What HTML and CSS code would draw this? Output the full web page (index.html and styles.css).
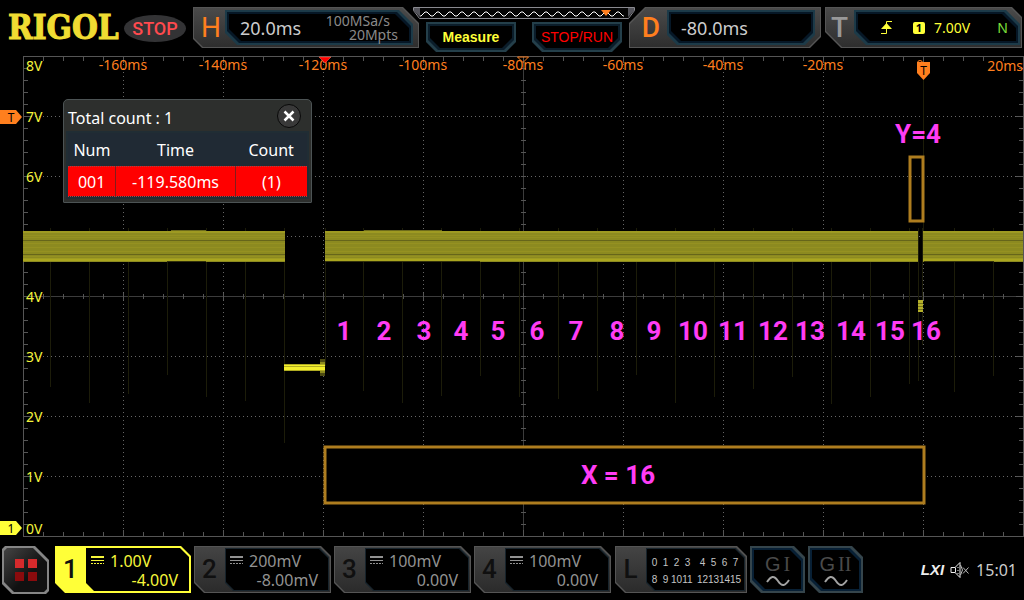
FILE: index.html
```html
<!DOCTYPE html>
<html lang="en">
<head>
<meta charset="utf-8">
<meta name="viewport" content="width=device-width, initial-scale=1">
<title>RIGOL oscilloscope</title>
<link rel="stylesheet" href="styles.css">
</head>
<body>
<header class="topbar">
  <div class="brand">
    <span class="logo">RIGOL</span>
    <span class="run-state">STOP</span>
  </div>
  <section class="cut panel panel-h">
    <span class="panel-key">H</span>
    <div class="cut screen screen-h">
      <span class="value">20.0ms</span>
      <span class="rates"><span>100MSa/s</span><span>20Mpts</span></span>
    </div>
  </section>
  <section class="center">
    <svg class="memory" viewBox="0 0 222 12" aria-hidden="true">
      <path d="M.5.5h221v3l-6 8H6.500l-6-8z" fill="#050505" stroke="#8a8a90"/>
      <path d="M1 1h6v9L1 4zM221 1h-6v9l6-6z" fill="#55555c"/>
      <path id="wave" fill="none" stroke="#fff"/>
      <path d="M188 3h10l-5 6z" fill="#ff7f1e"/>
    </svg>
    <div class="quick">
      <button class="cut quick-button measure" type="button">Measure</button>
      <button class="cut quick-button stoprun" type="button">STOP/RUN</button>
    </div>
  </section>
  <section class="cut panel panel-d">
    <span class="panel-key">D</span>
    <div class="cut screen screen-d"><span class="value">-80.0ms</span></div>
  </section>
  <section class="cut panel panel-t">
    <span class="panel-key">T</span>
    <div class="cut screen screen-t">
      <svg class="edge" viewBox="0 0 12 13" aria-hidden="true"><path d="M0 12.500h5.500v-12H11" fill="none" stroke="#ffff38"/><path d="M0 8h11L5.500 2z" fill="#ffff38"/></svg>
      <span class="source">1</span>
      <span class="level">7.00V</span>
      <span class="mode">N</span>
    </div>
  </section>
</header>

<main class="scope">
  <svg class="plot" viewBox="0 56 1024 482" role="img" aria-label="Waveform display">
    <defs>
      <pattern id="trace" width="4" height="31" y="231" patternUnits="userSpaceOnUse">
        <path d="M0 0h4v31H0z" fill="#8c8a20"/>
        <path d="M0 0h4v2H0zM0 27h4v1H0z" fill="#9e9a22"/>
        <path d="M0 28h4v2H0z" fill="#aaa61f"/>
        <path d="M0 4h4v1H0zM0 6h4v1H0zM0 12h4v1H0zM0 16h4v1H0zM0 20h4v1H0zM0 25h4v1H0z" fill="#959121"/>
        <path d="M0 9h4v1H0zM0 23h4v1H0z" fill="#66651a"/>
      </pattern>
    </defs>
    <g id="grid" shape-rendering="crispEdges"></g>
    <g id="spikes" shape-rendering="crispEdges"></g>
    <g fill="url(#trace)" shape-rendering="crispEdges">
      <path d="M23 231h262v31H23zM325 231h593v31H325zM923 231h100v31H923z"/>
    </g>
    <g shape-rendering="crispEdges">
      <path d="M167 261h39v1h-39zM325 261h155v1H325zM924 261h70v1h-70z" fill="#33320c"/>
      <path d="M171 230h35v1h-35zM364 230h78v1h-78z" fill="#6d6b1a"/>
      <path d="M284 364h41v7h-41z" fill="#b0ac22"/>
      <path d="M284 365h41v1h-41zM284 367h41v3h-41z" fill="#f3ee2c"/>
      <path d="M320 359h5v5h-5zM320 371h5v5h-5z" fill="#4c4a12"/>
      <path d="M320 362h5v2h-5zM320 371h5v2h-5z" fill="#8c8a1d"/>
      <path d="M918 300h5v12h-5z" fill="#b5b02a"/>
      <path d="M918 303h5v1h-5zM918 306h5v1h-5zM918 309h5v1h-5z" fill="#77751d"/>
    </g>
    <g id="axes" class="axis"></g>
    <path d="M319 57h12l-6 6z" fill="#f00" stroke="#ff8060" stroke-width=".5"/>
    <path d="M517.500 57h11l-5.500 5.500z" fill="none" stroke="#ff7f1e"/>
    <circle cx="920" cy="63" r="2.500" fill="none" stroke="#ff7f1e"/>
    <path d="M917 62h13v11l-6.500 7-6.500-7z" fill="#ff7f1e"/>
    <text class="tag" x="923.500" y="75">T</text>
    <path d="M0 110h16l6 7-6 7H0z" fill="#ff7f1e"/>
    <text class="tag" x="11" y="122">T</text>
    <path d="M0 521h16l6 7-6 7H0z" fill="#ffff38"/>
    <text class="tag" x="11" y="533">1</text>
    <rect x="325" y="447" width="599" height="56" class="mark"/>
    <rect x="910" y="157" width="13" height="64" class="mark hollow"/>
    <g id="notes" class="note">
      <text x="618" y="484">X = 16</text>
      <text x="918" y="143">Y=4</text>
    </g>
  </svg>

  <section class="popup" aria-label="Search results">
    <div class="popup-head">
      <span>Total count : 1</span>
      <button class="close" type="button" aria-label="Close"><svg viewBox="0 0 12 12"><path d="M1.500 1.500l9 9M10.500 1.500l-9 9" stroke="#fff" stroke-width="2.500"/></svg></button>
    </div>
    <table class="events">
      <thead><tr><th scope="col" class="num">Num</th><th scope="col" class="time">Time</th><th scope="col">Count</th></tr></thead>
      <tbody><tr><td>001</td><td>-119.580ms</td><td>(1)</td></tr></tbody>
    </table>
  </section>
</main>

<footer class="bottombar">
  <button class="cut menu" type="button" aria-label="Menu">
    <svg viewBox="0 0 22 23"><path d="M0 0h9v9H0zM13 0h9v9h-9z" fill="#d62a2c"/><path d="M0 13h9v9H0zM13 13h9v9h-9z" fill="#8a0b0d"/></svg>
  </button>
  <button class="cut channel active" type="button">
    <span class="channel-key">1</span>
    <span class="cut channel-screen"><span class="scale"><svg class="dc" viewBox="0 0 13 8"><path d="M0 1h13" stroke-width="2"/><path d="M0 4.500h13"/><path d="M0 7.500h13" stroke-dasharray="2 1"/></svg>1.00V</span><span class="offset">-4.00V</span></span>
  </button>
  <button class="cut channel" type="button">
    <span class="channel-key">2</span>
    <span class="cut channel-screen"><span class="scale"><svg class="dc" viewBox="0 0 13 8"><path d="M0 1h13" stroke-width="2"/><path d="M0 4.500h13"/><path d="M0 7.500h13" stroke-dasharray="2 1"/></svg>200mV</span><span class="offset">-8.00mV</span></span>
  </button>
  <button class="cut channel" type="button">
    <span class="channel-key">3</span>
    <span class="cut channel-screen"><span class="scale"><svg class="dc" viewBox="0 0 13 8"><path d="M0 1h13" stroke-width="2"/><path d="M0 4.500h13"/><path d="M0 7.500h13" stroke-dasharray="2 1"/></svg>100mV</span><span class="offset">0.00V</span></span>
  </button>
  <button class="cut channel" type="button">
    <span class="channel-key">4</span>
    <span class="cut channel-screen"><span class="scale"><svg class="dc" viewBox="0 0 13 8"><path d="M0 1h13" stroke-width="2"/><path d="M0 4.500h13"/><path d="M0 7.500h13" stroke-dasharray="2 1"/></svg>100mV</span><span class="offset">0.00V</span></span>
  </button>
  <button class="cut channel logic" type="button">
    <span class="channel-key">L</span>
    <span class="cut channel-screen bits">
      <span>0</span><span>1</span><span>2</span><span>3</span><i></i><span>4</span><span>5</span><span>6</span><span>7</span>
      <span>8</span><span>9</span><span>10</span><span>11</span><i></i><span>12</span><span>13</span><span>14</span><span>15</span>
    </span>
  </button>
  <button class="cut generator" type="button"><span>G<span class="roman">I</span></span><svg viewBox="0 0 24 12"><path d="M1 7C5 1 8 0 12 6s7 5 11-1" /></svg></button>
  <button class="cut generator" type="button"><span>G<span class="roman">II</span></span><svg viewBox="0 0 24 12"><path d="M1 7C5 1 8 0 12 6s7 5 11-1" /></svg></button>
  <div class="status">
    <span class="lxi">LXI</span>
    <svg class="speaker" viewBox="0 0 20 18" aria-label="Muted"><path d="M1 6.500h4l5-5v15l-5-5H1zM5.500 6.500v5M8 6v1m0 2v1m0 2v1" fill="none" stroke="#eee"/><path d="M10.500 4l2 5-2 5M13 6.500l5.500 6M18.500 6.500l-5.500 6" fill="none" stroke="#bbb"/></svg>
    <time>15:01</time>
  </div>
</footer>
<script src="plot.js"></script>
</body>
</html>
```

FILE: styles.css
```css
* { box-sizing: border-box; }

body {
  margin: 0;
  background: #000;
  color: #ccc;
  font-family: "Noto Sans", sans-serif;
  font-size: 16px;
}

button {
  margin: 0;
  padding: 0;
  border: 0;
  color: inherit;
  font: inherit;
  cursor: pointer;
}

svg { display: block; }

/* Box with cut corners: rim, middle layer and core */
.cut {
  --tl: 0px; --tr: 0px; --br: 0px; --bl: 0px;
  --rim: #555; --mid: #333; --core: #333;
  --shape: polygon(var(--tl) 0, calc(100% - var(--tr)) 0, 100% var(--tr), 100% calc(100% - var(--br)), calc(100% - var(--br)) 100%, var(--bl) 100%, 0 calc(100% - var(--bl)), 0 var(--tl));
  position: relative;
  isolation: isolate;
  background: var(--rim);
  clip-path: var(--shape);
}

.cut::before,
.cut::after {
  content: "";
  position: absolute;
  z-index: -1;
  inset: 2px;
  background: var(--mid);
  clip-path: var(--shape);
}

.cut::after {
  inset: 4px;
  background: var(--core);
}

/* Top bar */
.topbar {
  display: grid;
  grid-template-columns: 185px 226fr 210fr 196fr 199fr;
  height: 56px;
  padding: 7px 0 0 8px;
}

.brand {
  display: flex;
  align-items: center;
  height: 42px;
  gap: 7px;
}

.logo {
  width: 109px;
  color: #f0dc32;
  font: bold 33px/32px "DejaVu Serif Condensed", "DejaVu Serif", serif;
  -webkit-text-stroke: 1px #f0dc32;
}

.run-state {
  width: 62px;
  border-radius: 50%;
  background: #333335;
  color: #ff4a4e;
  font: 500 18px/27px Roboto, sans-serif;
  text-align: center;
}

.panel {
  --mid: linear-gradient(#4a4a4a, #2e2e2e);
  --core: transparent;
  display: flex;
  height: 41px;
  padding: 3px 6px 3px 0;
}

.panel::before { inset: 1px; }

.panel-h { --bl: 9px; --tr: 16px; }
.panel-d { --tl: 16px; --br: 11px; margin-right: 4px; }
.panel-t { --bl: 16px; --tr: 10px; margin-right: 2px; padding-right: 2px; }

.panel-key {
  flex: none;
  width: 32px;
  padding-left: 4px;
  color: #ff7f1e;
  font: 28px/36px Roboto, sans-serif;
  text-align: center;
}

.panel-d .panel-key { width: 38px; padding-left: 6px; font-weight: 500; }
.panel-t .panel-key { width: 29px; padding: 0; color: #999; font-weight: 500; }

.screen {
  --rim: #1c3a48; --mid: #061726; --core: #000;
  flex: 1;
  display: flex;
  align-items: center;
}

.screen-h { --bl: 12px; --tr: 14px; padding: 0 15px 0 15px; }
.screen-d { --bl: 10px; --br: 10px; padding-left: 14px; }
.screen-t { --bl: 12px; --tr: 14px; padding: 0 12px 0 27px; color: #ffff38; font-size: 14px; }

.value { font-size: 18px; line-height: 24px; }

.rates {
  flex: 1;
  display: flex;
  flex-direction: column;
  align-items: flex-end;
  color: #8a8a8a;
  font-size: 14px;
  line-height: 14px;
}

.rates span:first-child { padding-right: 8px; }

.edge { width: 12px; height: 13px; }

.source {
  width: 12px;
  margin: 0 9px 0 20px;
  border-radius: 2px;
  background: #ffff38;
  color: #000;
  font-size: 11px;
  font-weight: bold;
  line-height: 12px;
  text-align: center;
}

.mode { margin-left: auto; color: #7ee03c; }

.center { position: relative; margin: 0 -6px; }
.memory { width: 100%; }

.quick {
  display: flex;
  gap: 16px;
  padding: 3px 13px 0;
}

.quick-button {
  --rim: #243f4a; --mid: #0b1d2a; --core: #000;
  --bl: 10px; --br: 10px;
  flex: 1;
  height: 30px;
  font: 14px/26px "Liberation Sans", sans-serif;
}

.measure { color: #ffff38; font-weight: bold; }
.stoprun { color: #f00; }

/* Waveform area */
.scope { position: relative; }
.plot { width: 100%; height: auto; }

.axis text { font-size: 14px; fill: #ff7f1e; text-anchor: middle; }
.axis .end { text-anchor: end; }
.axis .volt { fill: #f4f43c; text-anchor: start; }
.tag { font-size: 12px; fill: #000; text-anchor: middle; }
.mark { fill: #000; stroke: #ae7d1f; stroke-width: 3; }
.hollow { fill: none; }
.note { font: bold 26px Roboto, sans-serif; fill: #ff3cf4; text-anchor: middle; }

.popup {
  position: absolute;
  top: 43px;
  left: 63px;
  width: 249px;
  padding: 2px 4px 5px;
  border: 1px solid #4c5354;
  border-radius: 5px 5px 1px 1px;
  background: #2d2f2d;
  color: #fff;
}

.popup-head {
  display: flex;
  align-items: center;
  justify-content: space-between;
  height: 31px;
  padding-right: 6px;
}

.close {
  display: grid;
  place-items: center;
  width: 24px;
  height: 24px;
  margin-bottom: 3px;
  border: 1px solid #090909;
  border-radius: 50%;
  background: #393939;
}

.close svg { width: 12px; height: 12px; }

.events {
  width: 100%;
  border-collapse: collapse;
  table-layout: fixed;
  outline: 2px solid #202d34;
  background: #202a34;
  line-height: 24px;
}

.events th { height: 33px; padding: 2px 0 0; font-weight: normal; }
.events .num { width: 20%; }
.events .time { width: 50%; }

.events td {
  height: 30px;
  padding: 1px 0 0;
  border: 1px dotted #a44;
  border-width: 1px 0;
  background: #f00;
  text-align: center;
}

.events td + td { border-left: 1px solid #821c1c; }

/* Bottom bar */
.bottombar {
  display: flex;
  gap: 3px;
  padding: 8px 7px 7px 2px;
}

.menu {
  --rim: #858585; --mid: linear-gradient(135deg, #444, #111 60%); --core: transparent;
  --tr: 14px; --bl: 10px; --tl: 3px; --br: 3px;
  display: grid;
  place-items: center;
  width: 47px;
  height: 48px;
  margin-right: 3px;
}

.menu svg { width: 22px; height: 23px; }

.channel {
  --rim: #555; --mid: linear-gradient(#444, #2b2b2b); --core: transparent;
  --bl: 10px; --tr: 10px;
  display: flex;
  width: 137px;
  height: 47px;
  padding: 2px 2px 2px 0;
  color: #929292;
  text-align: left;
}

.channel::before { inset: 1px; }
.active { --rim: #ffff38; --mid: #ffff38; width: 136px; color: #f6f63a; }

.channel-key {
  width: 31px;
  color: #101010;
  font: 500 26px/43px Roboto, sans-serif;
  text-align: center;
}

.channel-screen {
  --rim: #18242c; --mid: #000; --core: #000;
  --bl: 8px; --tr: 9px;
  flex: 1;
  display: flex;
  flex-direction: column;
  height: 43px;
  padding: 4px 11px 0 5px;
  line-height: 19px;
}

.channel-screen::before { inset: 1px; }
.active .channel-screen { --rim: #000; }
.scale { display: flex; gap: 6px; }
.offset { text-align: right; }
.dc { width: 13px; height: 8px; margin-top: 4px; stroke: currentColor; }

.logic { width: 132px; margin-left: 1px; }

.bits {
  display: grid;
  grid-template-columns: repeat(4, 11px) 4px repeat(4, 11px);
  padding: 6px 0 4px 3px;
  color: #c4c4c4;
  font: 10px/17px "Liberation Sans", sans-serif;
  text-align: center;
}

.generator {
  --rim: #35454c; --mid: #082035; --core: #000;
  --tr: 11px; --bl: 11px;
  width: 55px;
  height: 47px;
  color: #4a4a4a;
  font: 20px/22px "Liberation Sans", sans-serif;
}

.generator .roman { padding-left: 3px; font-family: "Liberation Serif", serif; }
.generator svg { width: 24px; height: 12px; margin: 0 auto; fill: none; stroke: #a2a2a2; stroke-width: 2; }

.status {
  display: flex;
  align-items: center;
  gap: 6px;
  height: 47px;
  margin-left: auto;
}

.lxi { color: #eee; font: italic bold 15px/20px "Liberation Sans", sans-serif; }
.speaker { width: 20px; height: 18px; }
```

FILE: plot.js
```javascript
const NS = "http://www.w3.org/2000/svg";

function add(parent, tag, attrs, text) {
  const node = document.createElementNS(NS, tag);
  for (const key in attrs) node.setAttribute(key, attrs[key]);
  if (text) node.textContent = text;
  document.getElementById(parent).appendChild(node);
}

// Graticule: dotted divisions, solid frame, ticks
let dots = "";
for (let x = 123; x < 1023; x += 100) dots += `M${x + 0.5} 56V536`;
for (let y = 116; y < 536; y += 60) dots += `M23 ${y + 0.5}H1023`;
add("grid", "path", { d: dots, stroke: "#666", "stroke-dasharray": "1 3" });
add("grid", "path", { d: "M23 296.5H1023M523.5 56V536", stroke: "#3c3c3c" });
add("grid", "path", { d: "M23.5 56.5H1023.5V536.5H23.500z", fill: "none", stroke: "#555" });

let ticks = "";
for (let x = 43; x < 1023; x += 20) {
  const major = (x - 23) % 100 === 0;
  const size = major ? 6 : 4;
  const half = major ? 3 : 2;
  ticks += `M${x + 0.5} 57v${size}M${x + 0.5} 536v-${size}M${x + 0.5} ${296 - half}v${half * 2 + 1}`;
}
for (let y = 68; y < 536; y += 12) {
  const size = (y - 56) % 60 === 0 ? 7 : 4;
  ticks += `M24 ${y + 0.5}h${size}M1023 ${y + 0.5}h-${size}M521 ${y + 0.5}h5`;
}
add("grid", "path", { d: ticks, stroke: "#555" });

// Faint glitch spikes: [x, lowest y]
const spikes = [
  [50, 387], [89, 403], [128, 394], [167, 375], [206, 397], [245, 401], [284, 443],
  [325, 366], [363, 391], [402, 403], [441, 396], [480, 376], [519, 397], [558, 399],
  [597, 391], [636, 375], [675, 403], [714, 397], [753, 389], [792, 377], [831, 404],
  [870, 397], [909, 384], [918, 381], [922, 345], [954, 392], [993, 376]
];
for (const [x, y] of spikes) add("spikes", "path", { d: `M${x + 0.5} 228V${y}`, stroke: "#1c1c09" });
add("spikes", "path", { d: "M923.5 80V231", stroke: "#1c1c09" });

// Axis labels
for (let ms = -160, x = 123; ms < 0; ms += 20, x += 100) add("axes", "text", { x, y: 70 }, `${ms}ms`);
add("axes", "text", { x: 1023, y: 71, class: "end" }, "20ms");
const volts = [[8, 71], [7, 122], [6, 182], [4, 302], [3, 362], [2, 422], [1, 482], [0, 534]];
for (const [v, y] of volts) add("axes", "text", { x: 26, y, class: "volt" }, `${v}V`);

// Pulse numbers
const centers = [344, 384, 424, 461, 498, 537, 576, 617, 654, 693, 733, 773, 810, 851, 890, 926];
centers.forEach((x, i) => add("notes", "text", { x, y: 340 }, String(i + 1)));

// Memory overview wave
let wave = "M7 9";
for (let x = 7; x < 209; x += 12) wave += "l1 0 4-4 2 0 4 4 1 0";
document.getElementById("wave").setAttribute("d", wave);
```
